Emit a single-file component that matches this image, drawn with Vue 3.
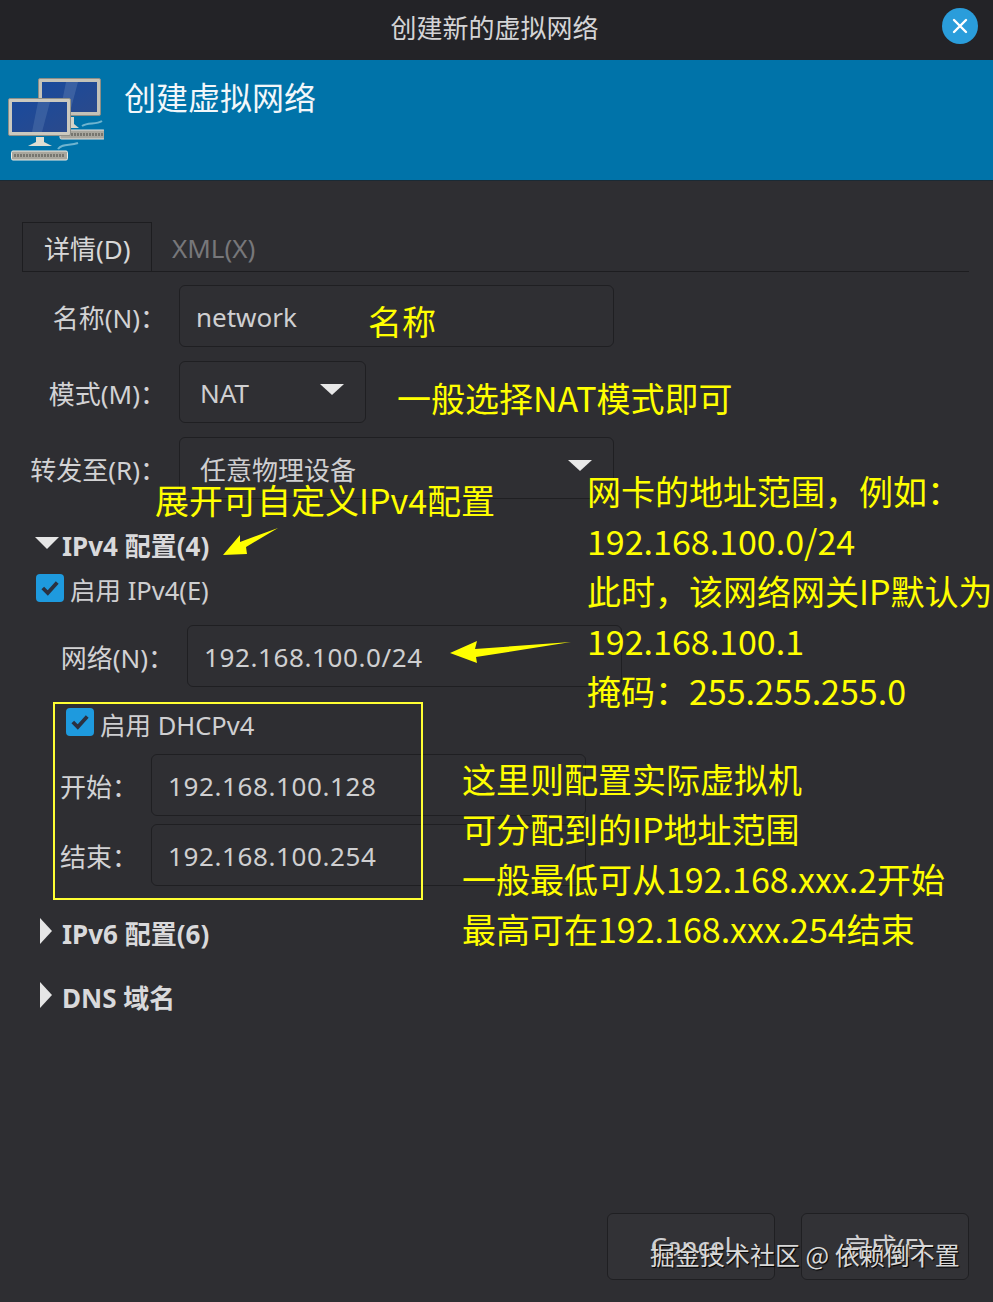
<script setup>
const lines1 = ['网卡的地址范围，例如：', '192.168.100.0/24', '此时，该网络网关IP默认为', '192.168.100.1', '掩码：255.255.255.0']
const lines2 = ['这里则配置实际虚拟机', '可分配到的IP地址范围', '一般最低可从192.168.xxx.2开始', '最高可在192.168.xxx.254结束']
</script>

<template>
  <div class="window">
    <header class="titlebar">
      <span class="title">创建新的虚拟网络</span>
      <button class="close" aria-label="关闭">
        <svg width="18" height="18" viewBox="0 0 18 18"><path d="M3 3 L15 15 M15 3 L3 15" stroke="#fff" stroke-width="2.4" stroke-linecap="round"/></svg>
      </button>
    </header>

    <section class="banner">
      <svg class="net-icon" width="96" height="86" viewBox="0 0 96 86">
        <defs>
          <linearGradient id="scr" x1="0" y1="0" x2="1" y2="1">
            <stop offset="0" stop-color="#1a4a9c"/><stop offset="1" stop-color="#2a4a8c"/>
          </linearGradient>
        </defs>
        <path d="M66 40 L66 47 L71 51 L55 51 L60 47 L60 40Z" fill="#d6d4c8"/>
        <rect x="30.5" y="1.5" width="62" height="37" rx="1.5" fill="#c4c2b8" stroke="#8d8d86"/>
        <rect x="34" y="5" width="55" height="30" fill="url(#scr)"/>
        <path d="M58 5 L70 5 L62 35 L52 35Z" fill="#5b7cb2" opacity=".45"/>
        <rect x="52" y="53" width="45" height="9" rx="1.5" fill="#a9a79e" stroke="#dededa"/>
        <path d="M54 57.5 H95" stroke="#77766f" stroke-width="3" stroke-dasharray="2 1"/>
        <path d="M74 49 C80 45 88 48 94 44" stroke="#6fb4cf" stroke-width="2" fill="none"/>
        <path d="M36 60 L36 65 L44 69 L20 69 L28 65 L28 60Z" fill="#e0ded2"/>
        <rect x="0.5" y="21.5" width="62" height="37" rx="1.5" fill="#cbc9bf" stroke="#8f8f88"/>
        <rect x="4" y="25" width="55" height="30" fill="url(#scr)"/>
        <path d="M30 25 L42 25 L34 55 L24 55Z" fill="#5b7cb2" opacity=".4"/>
        <rect x="3.5" y="74" width="56" height="9" rx="1.5" fill="#a9a79e" stroke="#ecece4"/>
        <path d="M6 78.5 H57" stroke="#77766f" stroke-width="3" stroke-dasharray="2 1"/>
        <path d="M50 72 C54 66 62 69 70 66" stroke="#6fb4cf" stroke-width="2" fill="none"/>
      </svg>
      <h1 class="banner-title">创建虚拟网络</h1>
    </section>

    <main class="content">
      <nav class="tabs">
        <div class="tab active">详情(D)</div>
        <div class="tab">XML(X)</div>
      </nav>

      <div class="form">
        <div class="row">
          <label class="label">名称(N)：</label>
          <div class="field wide"><span>network</span></div>
        </div>
        <div class="row">
          <label class="label">模式(M)：</label>
          <div class="field select short"><span>NAT</span><i class="caret"></i></div>
        </div>
        <div class="row">
          <label class="label">转发至(R)：</label>
          <div class="field select wide"><span>任意物理设备</span><i class="caret"></i></div>
        </div>
      </div>

      <div class="expander open"><i class="tri-down"></i><b>IPv4 配置(4)</b></div>
      <div class="check-row">
        <span class="check"><svg width="20" height="18" viewBox="0 0 18 16"><path d="M2.5 8 L7 12.5 L15.5 3" fill="none" stroke="#2b3140" stroke-width="3.4"/></svg></span>
        <span>启用 IPv4(E)</span>
      </div>
      <div class="row net-row">
        <label class="label">网络(N)：</label>
        <div class="field wide ip"><span>192.168.100.0/24</span></div>
      </div>

      <div class="dhcp">
        <div class="check-row inner">
          <span class="check"><svg width="20" height="18" viewBox="0 0 18 16"><path d="M2.5 8 L7 12.5 L15.5 3" fill="none" stroke="#2b3140" stroke-width="3.4"/></svg></span>
          <span class="dhcp-text">启用 DHCPv4</span>
        </div>
        <div class="row dhcp-row first">
          <label class="label small">开始：</label>
          <div class="field wide ip"><span>192.168.100.128</span></div>
        </div>
        <div class="row dhcp-row">
          <label class="label small">结束：</label>
          <div class="field wide ip"><span>192.168.100.254</span></div>
        </div>
      </div>

      <div class="expander six"><i class="tri-right"></i><b>IPv6 配置(6)</b></div>
      <div class="expander dns"><i class="tri-right"></i><b>DNS 域名</b></div>

      <footer class="actions">
        <button class="btn">Cancel</button>
        <button class="btn">完成(F)</button>
      </footer>
    </main>

    <div class="note n-name">名称</div>
    <div class="note n-mode">一般选择NAT模式即可</div>
    <div class="note n-expand">展开可自定义IPv4配置</div>
    <div class="note n-range"><div v-for="l in lines1" :key="l">{{ l }}</div></div>
    <div class="note n-dhcp"><div v-for="l in lines2" :key="l">{{ l }}</div></div>

    <svg class="arrow a1" width="58" height="32" viewBox="0 0 58 32"><path d="M1 28 L18 8 L18 15 L56 1 L24 20 L25 27Z" fill="#ffff00"/></svg>
    <svg class="arrow a2" width="124" height="26" viewBox="0 0 124 26"><path d="M1 14 L28 2 L26 10 L122 3 L27 18 L28 24Z" fill="#ffff00"/></svg>

    <div class="watermark">掘金技术社区 @ 依赖倒不置</div>
  </div>
</template>

<style>
html, body { margin: 0; background: #2e2e32; }
</style>

<style scoped>
.window {
  position: relative;
  width: 993px;
  height: 1302px;
  overflow: hidden;
  background: #2e2e32;
  color: #d8d8d8;
  font-family: "Noto Sans", "Noto Sans CJK SC", sans-serif;
  font-size: 26px;
}
.titlebar {
  height: 60px;
  background: #232327;
  display: flex;
  align-items: center;
  justify-content: center;
  position: relative;
}
.title { font-size: 26px; color: #d4d4d6; margin: -7px 4px 0 0; font-family: "Noto Sans CJK SC", sans-serif; }
.close {
  position: absolute;
  left: 942px;
  top: 8px;
  width: 36px;
  height: 36px;
  border: 0;
  padding: 0;
  border-radius: 50%;
  background: #2a9ddb;
  display: flex;
  align-items: center;
  justify-content: center;
}
.banner {
  height: 121px;
  box-sizing: border-box;
  background: #0073a9;
  border-bottom: 1px solid #1a2a35;
  display: flex;
  align-items: flex-start;
  padding: 17px 0 0 8px;
}
.banner-title {
  margin: -2px 0 0 20px;
  font-size: 32px;
  line-height: 42px;
  font-weight: 400;
  color: #f2f7fa;
  font-family: "Noto Sans CJK SC", sans-serif;
}
.content {
  padding: 41px 0 0;
  position: relative;
  height: 1080px;
  box-sizing: border-box;
}
.tabs {
  margin-left: 22px;
  width: 947px;
  height: 50px;
  box-sizing: border-box;
  border-bottom: 1.5px solid #1d1d20;
  display: flex;
}
.tab {
  height: 49px;
  box-sizing: border-box;
  padding: 8px 20px 0;
  line-height: 36px;
  color: #77777a;
  font-size: 26px;
}
.tab.active {
  width: 130px;
  padding: 8px 0 0 21px;
  color: #d8d8d8;
  border: 1.5px solid #1d1d20;
  border-bottom: 0;
}
.form {
  margin-top: 13px;
  display: flex;
  flex-direction: column;
  gap: 14px;
}
.row { display: flex; align-items: center; height: 62px; }
.label {
  width: 166px;
  text-align: right;
  flex: none;
  white-space: nowrap;
  font-size: 26px;
  color: #d2d2d4;
  padding-top: 1px;
}
.field {
  box-sizing: border-box;
  height: 62px;
  margin-left: 13px;
  border: 1.5px solid #1f1f22;
  border-radius: 6px;
  background: #2f2f33;
  display: flex;
  align-items: center;
  padding: 2px 0 0 16px;
  font-size: 26px;
  color: #cfcfd1;
  flex: none;
}
.wide { width: 435px; }
.short { width: 187px; }
.select { padding-left: 20px; position: relative; justify-content: space-between; padding-right: 21px; }
.caret {
  width: 0;
  height: 0;
  border-left: 12px solid transparent;
  border-right: 12px solid transparent;
  border-top: 11px solid #e8e8e8;
  margin-top: -7px;
}
.ip { letter-spacing: 0.6px; }
.expander {
  display: flex;
  align-items: center;
  font-size: 26px;
  height: 40px;
  color: #d9d9db;
}
.expander b { font-weight: 700; }
.expander.open { margin-top: 26px; padding-left: 35px; }
.tri-down {
  width: 0;
  height: 0;
  border-left: 12px solid transparent;
  border-right: 12px solid transparent;
  border-top: 12px solid #e6e6e6;
  margin: -4px 3px 0 0;
}
.tri-right {
  width: 0;
  height: 0;
  border-top: 13px solid transparent;
  border-bottom: 13px solid transparent;
  border-left: 12px solid #e6e6e6;
  margin: -4px 10px 0 0;
}
.six { margin-top: 13px; padding-left: 40px; }
.dns { margin-top: 24px; padding-left: 40px; }
.check-row {
  display: flex;
  align-items: center;
  margin: 3px 0 0 36px;
  height: 40px;
  gap: 6px;
  font-size: 25.5px;
  color: #cfcfd1;
}
.check-row.inner { margin: 5px 0 0 13px; }
.dhcp-text { padding-top: 3px; }
.check {
  width: 28px;
  height: 28px;
  border-radius: 4px;
  background: #1e9ade;
  display: flex;
  align-items: center;
  justify-content: center;
  flex: none;
}
.net-row { margin-top: 17px; }
.net-row .label { width: 174px; }
.dhcp {
  position: relative;
  margin: 15px 0 0 53px;
  width: 370px;
  height: 198px;
  box-sizing: border-box;
}
.dhcp::after {
  content: "";
  position: absolute;
  inset: 0;
  border: 2px solid #ffff33;
  pointer-events: none;
}
.dhcp-row { margin-top: 8px; }
.dhcp-row.first { margin-top: 12px; }
.label.small { width: 85px; }
.dhcp-row .field { margin-left: 13px; }
.actions {
  position: absolute;
  left: 607px;
  top: 1032px;
  display: flex;
  gap: 26px;
}
.btn {
  width: 168px;
  height: 67px;
  box-sizing: border-box;
  background: #323236;
  border: 1.5px solid #1f1f22;
  border-radius: 6px;
  color: #cfcfd1;
  font: inherit;
  font-size: 26px;
  padding: 0 0 2px;
}
.note {
  position: absolute;
  color: #ffff00;
  font-family: "Noto Sans CJK SC", "Noto Sans", sans-serif;
  font-size: 34px;
  line-height: 50px;
  white-space: nowrap;
}
.n-name { left: 368px; top: 296px; }
.n-mode { left: 397px; top: 373px; }
.n-expand { left: 155px; top: 475px; }
.n-range { left: 587px; top: 466px; }
.n-dhcp { left: 462px; top: 754px; }
.arrow { position: absolute; }
.a1 { left: 222px; top: 527px; }
.a2 { left: 449px; top: 639px; }
.watermark {
  position: absolute;
  left: 650px;
  top: 1236px;
  font-size: 25px;
  line-height: 36px;
  color: #d9d9d9;
  font-family: "Noto Sans CJK SC", sans-serif;
  text-shadow: 1px 1px 1px #000;
  white-space: nowrap;
}
</style>
